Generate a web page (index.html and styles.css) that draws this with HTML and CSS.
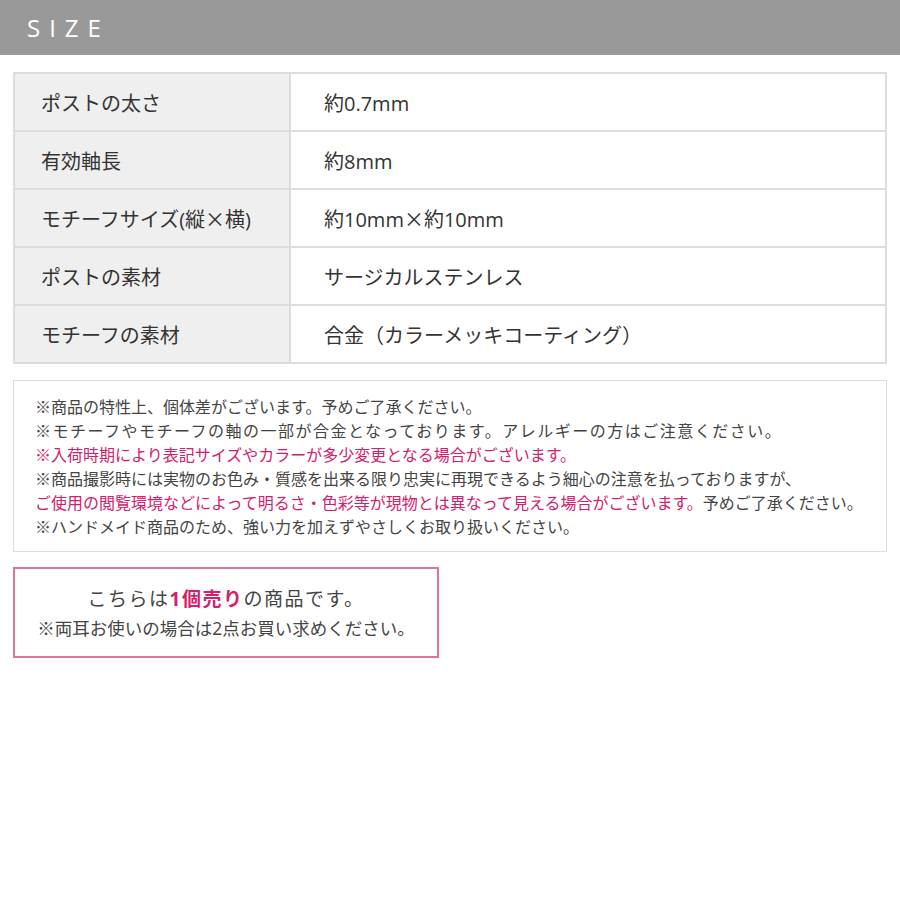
FILE: index.html
```html
<!DOCTYPE html>
<html lang="ja">
<head>
  <meta charset="UTF-8">
  <title>SIZE</title>
  <link rel="stylesheet" href="styles.css">
</head>
<body>
  <div class="heading">SIZE</div>
  <div class="content">
    <table class="spec">
      <tr><th>ポストの太さ</th><td>約0.7mm</td></tr>
      <tr><th>有効軸長</th><td>約8mm</td></tr>
      <tr><th>モチーフサイズ(縦<span class="cjk">×</span>横)</th><td>約10mm<span class="cjk">×</span>約10mm</td></tr>
      <tr><th>ポストの素材</th><td>サージカルステンレス</td></tr>
      <tr><th>モチーフの素材</th><td>合金（カラーメッキコーティング）</td></tr>
    </table>

    <div class="notes">
      <p>※商品の特性上、個体差がございます。予めご了承ください。</p>
      <p class="wide">※モチーフやモチーフの軸の一部が合金となっております。アレルギーの方はご注意ください。</p>
      <p class="pink">※入荷時期により表記サイズやカラーが多少変更となる場合がございます。</p>
      <p>※商品撮影時には実物のお色み・質感を出来る限り忠実に再現できるよう細心の注意を払っておりますが、</p>
      <p><span class="pink">ご使用の閲覧環境などによって明るさ・色彩等が現物とは異なって見える場合がございます。</span>予めご了承ください。</p>
      <p>※ハンドメイド商品のため、強い力を加えずやさしくお取り扱いください。</p>
    </div>

    <div class="single">
      <p class="single-main">こちらは<strong>1個売り</strong>の商品です。</p>
      <p class="single-sub">※両耳お使いの場合は2点お買い求めください。</p>
    </div>
  </div>
</body>
</html>
```

FILE: styles.css
```css
body {
  margin: 0;
  background: #fff;
  color: #333;
  font-family: "Open Sans", "Noto Sans CJK JP", sans-serif;
}

.cjk {
  font-family: "Noto Sans CJK JP", sans-serif;
}

.heading {
  height: 55px;
  background-color: #999;
  color: #fff;
  font-size: 24px;
  letter-spacing: 9px;
  line-height: 55px;
  padding-left: 27px;
}

.content {
  padding: 17px 13px 0;
}

.spec {
  width: 100%;
  border-collapse: collapse;
  border: 2px solid #ddd;
  font-size: 20px;
}

.spec th,
.spec td {
  height: 56px;
  padding: 0;
  border: 2px solid #ddd;
  text-align: left;
  font-weight: normal;
}

.spec th {
  width: 248px;
  padding-left: 26px;
  background-color: #efefef;
}

.spec td {
  padding-left: 33px;
}

.notes {
  margin-top: 16px;
  border: 1px solid #ddd;
  padding: 14px 21px 12px;
  font-size: 16px;
  line-height: 24px;
  color: #444;
}

.notes p {
  margin: 0;
  white-space: nowrap;
}

.notes .wide {
  letter-spacing: 1.5px;
}

.pink {
  color: #d2206c;
}

.single {
  width: 422px;
  margin-top: 15px;
  border: 2px solid #d8769f;
  padding: 15px 0 14px;
  text-align: center;
  color: #444;
}

.single p {
  margin: 0;
}

.single-main {
  font-size: 19px;
  line-height: 30px;
  letter-spacing: 1.5px;
}

.single-main strong {
  color: #d2206c;
}

.single-sub {
  font-size: 17.5px;
  line-height: 28px;
}
```
